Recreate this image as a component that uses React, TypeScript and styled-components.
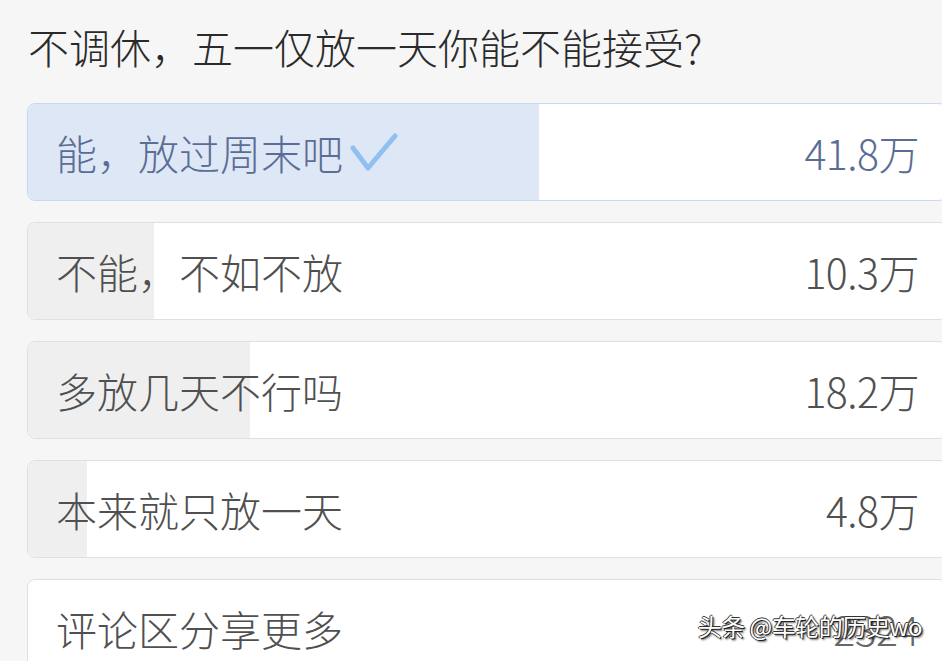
import React from 'react';
import styled, { createGlobalStyle } from 'styled-components';

type Option = {
  label: string;
  count: string;
  value: number;
  selected?: boolean;
};

const options: Option[] = [
  { label: '能，放过周末吧', count: '41.8万', value: 41.8, selected: true },
  { label: '不能，不如不放', count: '10.3万', value: 10.3 },
  { label: '多放几天不行吗', count: '18.2万', value: 18.2 },
  { label: '本来就只放一天', count: '4.8万', value: 4.8 },
];

const total = options.reduce((sum, o) => sum + o.value, 0);

const GlobalStyle = createGlobalStyle`
  html, body {
    margin: 0;
    padding: 0;
    background: #f6f6f6;
    overflow: hidden;
  }
  body {
    font-family: "Noto Sans CJK SC", "Noto Sans", sans-serif;
  }
`;

const Page = styled.div`
  position: relative;
  width: 942px;
  height: 661px;
  padding: 21px 0 0 27px;
  box-sizing: border-box;
  overflow: hidden;
`;

const Title = styled.h1`
  margin: 0 0 32px 1px;
  font-size: 41px;
  line-height: 50px;
  font-weight: 300;
  color: #2a2a2a;
`;

const List = styled.div`
  display: flex;
  flex-direction: column;
  gap: 21px;
`;

const Card = styled.div<{ $selected?: boolean }>`
  position: relative;
  width: 920px;
  height: 98px;
  box-sizing: border-box;
  border: 1px solid ${(p) => (p.$selected ? '#c8d8ee' : '#e0e0e0')};
  border-radius: 8px;
  background: #fff;
  overflow: hidden;
`;

const Fill = styled.div<{ $selected?: boolean }>`
  position: absolute;
  left: 0;
  top: 0;
  bottom: 0;
  background: ${(p) => (p.$selected ? '#dee7f5' : '#efefef')};
`;

const Row = styled.div<{ $selected?: boolean }>`
  position: relative;
  height: 100%;
  display: flex;
  align-items: center;
  justify-content: space-between;
  padding: 0 27px 0 28px;
  font-size: 41px;
  font-weight: 300;
  color: ${(p) => (p.$selected ? '#5a6d96' : '#505050')};
`;

const Label = styled.div`
  display: flex;
  align-items: center;
  gap: 7px;
`;

const Count = styled.div<{ $faint?: boolean }>`
  letter-spacing: -0.5px;
  color: ${(p) => (p.$faint ? '#666' : 'inherit')};
`;

const Watermark = styled.div`
  position: absolute;
  right: 20px;
  bottom: 18px;
  font-size: 24px;
  letter-spacing: -0.5px;
  color: #fff;
  text-shadow: 1px 1px 0 #222, -1px 0 0 #333, 0 -1px 0 #333, 2px 2px 2px rgba(0, 0, 0, 0.6);
`;

const Check = () => (
  <svg width="48" height="40" viewBox="0 0 48 40" fill="none">
    <path
      d="M3 16 L18 36 L45 4"
      stroke="#8fc0ef"
      strokeWidth="5"
      strokeLinecap="round"
      strokeLinejoin="round"
    />
  </svg>
);

export default function App() {
  return (
    <>
      <GlobalStyle />
      <Page>
        <Title>不调休，五一仅放一天你能不能接受?</Title>
        <List>
          {options.map((o) => (
            <Card key={o.label} $selected={o.selected}>
              <Fill $selected={o.selected} style={{ width: `${(o.value / total) * 100}%` }} />
              <Row $selected={o.selected}>
                <Label>
                  {o.label}
                  {o.selected && <Check />}
                </Label>
                <Count>{o.count}</Count>
              </Row>
            </Card>
          ))}
          <Card>
            <Row>
              <Label>评论区分享更多</Label>
              <Count $faint>2324</Count>
            </Row>
          </Card>
        </List>
        <Watermark>头条 @车轮的历史wo</Watermark>
      </Page>
    </>
  );
}
